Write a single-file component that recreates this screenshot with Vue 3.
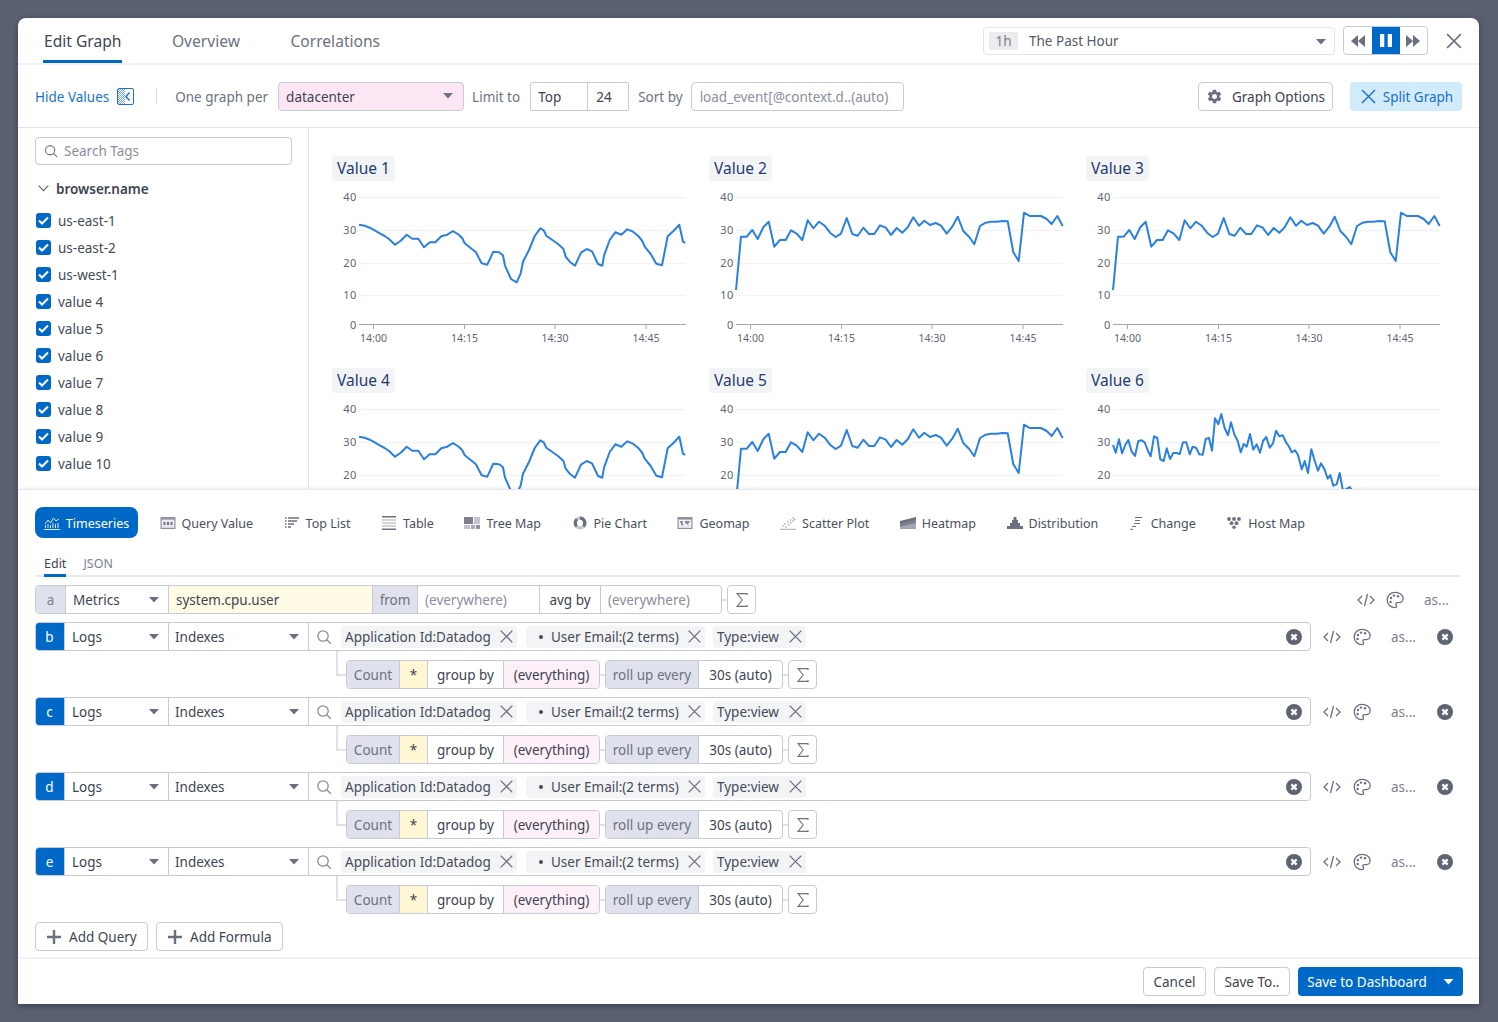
<script setup>
const line1 = [[118,224],[135,227],[150,233],[165,241],[180,250],[195,258],[208,267],[226,284],[243,272],[261,254],[278,266],[296,266],[313,292],[330,277],[347,277],[365,259],[383,254],[400,243],[418,255],[428,265],[435,280],[452,293],[469,307],[478,325],[486,340],[503,344],[521,305],[538,307],[550,316],[556,347],[574,387],[591,397],[603,370],[610,335],[628,300],[645,258],[662,235],[672,241],[680,257],[697,269],[715,282],[731,296],[738,320],[750,335],[766,347],[784,308],[801,297],[817,304],[835,342],[848,347],[853,317],[870,270],[887,247],[905,254],[923,238],[940,245],[955,257],[968,273],[975,290],[993,312],[1010,341],[1027,346],[1044,259],[1062,242],[1079,224],[1090,275],[1097,279]]
const line2 = [[78,420],[93,260],[110,260],[127,240],[143,267],[160,232],[176,215],[193,290],[210,270],[227,270],[243,241],[260,251],[277,270],[293,211],[310,235],[327,215],[344,227],[360,248],[377,261],[393,251],[410,204],[427,252],[443,257],[460,233],[477,252],[493,252],[510,226],[527,233],[543,255],[560,234],[577,248],[593,232],[610,202],[627,227],[643,212],[660,225],[677,219],[693,227],[710,251],[727,230],[743,200],[760,243],[777,260],[793,283],[810,228],[827,218],[843,215],[860,215],[877,213],[893,214],[910,307],[926,333],[942,188],[959,198],[976,198],[993,198],[1010,207],[1025,222],[1042,198],[1058,228]]
const line6 = [[85,240],[93,263],[103,223],[112,265],[122,240],[131,225],[141,260],[151,273],[161,228],[171,226],[180,232],[190,258],[198,274],[208,214],[218,219],[227,283],[237,288],[246,250],[256,282],[266,264],[276,264],[285,267],[295,232],[305,232],[315,268],[324,245],[334,248],[344,268],[354,269],[363,222],[373,219],[382,257],[391,160],[401,178],[410,147],[420,190],[430,211],[439,172],[449,208],[459,228],[468,262],[477,237],[486,245],[496,207],[506,254],[516,238],[526,263],[535,228],[545,216],[555,248],[565,235],[574,197],[584,214],[594,211],[604,232],[612,243],[621,262],[631,256],[640,270],[651,313],[660,288],[670,324],[680,253],[690,287],[700,317],[709,295],[719,312],[729,341],[737,330],[746,362],[756,358],[765,324],[775,378],[785,372],[795,366],[805,380],[820,400]]

const toPoints = (pts, x0, dy = 0) =>
  pts.map(([x, y]) => `${(27 + (x - x0) / 3).toFixed(1)},${(150 + (y + dy) / 3 - 181).toFixed(1)}`).join(' ')

const charts = [
  { title: 'Value 1', points: toPoints(line1, 118), full: true },
  { title: 'Value 2', points: toPoints(line2, 78), full: true },
  { title: 'Value 3', points: toPoints(line2, 78), full: true },
  { title: 'Value 4', points: toPoints(line1, 118), full: false },
  { title: 'Value 5', points: toPoints(line2, 78), full: false },
  { title: 'Value 6', points: toPoints(line6, 85, 9), full: false }
]
const gridLines = [{ v: 40, y: 16.5 }, { v: 30, y: 49.5 }, { v: 20, y: 82.5 }, { v: 10, y: 114.5 }]
const upperLines = gridLines.slice(0, 3)
const ticks = [{ t: '14:00', x: 41.5 }, { t: '14:15', x: 132.5 }, { t: '14:30', x: 223 }, { t: '14:45', x: 314 }]

const tags = ['us-east-1', 'us-east-2', 'us-west-1', 'value 4', 'value 5', 'value 6', 'value 7', 'value 8', 'value 9', 'value 10']

const chartTypes = [
  { id: 'i-query', label: 'Query Value' },
  { id: 'i-top', label: 'Top List' },
  { id: 'i-table', label: 'Table' },
  { id: 'i-tree', label: 'Tree Map' },
  { id: 'i-pie', label: 'Pie Chart' },
  { id: 'i-geo', label: 'Geomap' },
  { id: 'i-scatter', label: 'Scatter Plot' },
  { id: 'i-heat', label: 'Heatmap' },
  { id: 'i-dist', label: 'Distribution' },
  { id: 'i-change', label: 'Change' },
  { id: 'i-host', label: 'Host Map' }
]
const queries = ['b', 'c', 'd', 'e']
</script>

<template>
  <div class="page">
    <svg class="defs" xmlns="http://www.w3.org/2000/svg">
      <symbol id="x" viewBox="0 0 16 16"><path d="M2.5 2.5l11 11M13.5 2.5l-11 11" fill="none" stroke="currentColor" stroke-width="1.2"/></symbol>
      <symbol id="search" viewBox="0 0 16 16"><circle cx="7" cy="7" r="5.2" fill="none" stroke="currentColor" stroke-width="1.3"/><path d="M10.8 10.8l4 4" fill="none" stroke="currentColor" stroke-width="1.3"/></symbol>
      <symbol id="caret" viewBox="0 0 10 6"><path d="M0 0h10L5 5.5z" fill="currentColor"/></symbol>
      <symbol id="sigma" viewBox="0 0 16 16"><path d="M13 3V1.6H3L8.2 8 3 14.4h10V13" fill="none" stroke="currentColor" stroke-width="1.1"/></symbol>
      <symbol id="code" viewBox="0 0 18 14"><path d="M5 3L1 7l4 4M13 3l4 4-4 4M10.5 1L7.5 13" fill="none" stroke="currentColor" stroke-width="1.3"/></symbol>
      <symbol id="palette" viewBox="0 0 18 18"><path d="M9 1.3C4.7 1.3 1.2 4.8 1.2 9S4.7 16.7 9 16.7c1 0 1.6-.7 1.6-1.4 0-.5-.2-.8-.4-1.1-.3-.3-.4-.7-.4-1 0-.8.7-1.5 1.5-1.5h1.6c2.4 0 4.3-1.9 4.3-4.2 0-3.3-3.3-6.2-8.2-6.2z" fill="none" stroke="currentColor" stroke-width="1.3"/><circle cx="5" cy="7" r="1.2" fill="currentColor"/><circle cx="8" cy="4.6" r="1.2" fill="currentColor"/><circle cx="12" cy="5.2" r="1.2" fill="currentColor"/><circle cx="4.6" cy="11" r="1.2" fill="currentColor"/></symbol>
      <symbol id="xcircle" viewBox="0 0 16 16"><circle cx="8" cy="8" r="8" fill="currentColor"/><path d="M5.4 5.4l5.2 5.2M10.6 5.4l-5.2 5.2" fill="none" stroke="#fff" stroke-width="2.2"/></symbol>
      <symbol id="plus" viewBox="0 0 14 14"><path d="M7 0v14M0 7h14" fill="none" stroke="currentColor" stroke-width="2.4"/></symbol>
      <symbol id="gear" viewBox="0 0 24 24"><path fill="currentColor" d="M19.14 12.94c.04-.3.06-.61.06-.94 0-.32-.02-.64-.07-.94l2.03-1.58a.49.49 0 0 0 .12-.61l-1.92-3.32a.488.488 0 0 0-.59-.22l-2.39.96c-.5-.38-1.03-.7-1.62-.94l-.36-2.54a.484.484 0 0 0-.48-.41h-3.84c-.24 0-.43.17-.47.41l-.36 2.54c-.59.24-1.13.57-1.62.94l-2.39-.96c-.22-.08-.47 0-.59.22L2.74 8.87c-.12.21-.08.47.12.61l2.03 1.58c-.05.3-.09.63-.09.94s.02.64.07.94l-2.03 1.58a.49.49 0 0 0-.12.61l1.92 3.32c.12.22.37.29.59.22l2.39-.96c.5.38 1.03.7 1.62.94l.36 2.54c.05.24.24.41.48.41h3.84c.24 0 .44-.17.47-.41l.36-2.54c.59-.24 1.13-.56 1.62-.94l2.39.96c.22.08.47 0 .59-.22l1.92-3.32c.12-.22.07-.47-.12-.61l-2.01-1.58zM12 15.6c-1.98 0-3.6-1.62-3.6-3.6s1.62-3.6 3.6-3.6 3.6 1.62 3.6 3.6-1.62 3.6-3.6 3.6z"/></symbol>
      <symbol id="i-ts" viewBox="0 0 16 14"><path d="M1 8l3-4 2.5 3 3-5 2.5 3 3-2" fill="none" stroke="currentColor" stroke-width="1"/><path d="M0 13.5h16M1.5 9v3M4 8v4M6.5 9v3M9 7v5M11.5 8v4M14 7v5" fill="none" stroke="currentColor" stroke-width="1"/></symbol>
      <symbol id="i-query" viewBox="0 0 16 14"><rect x=".5" y="1" width="15" height="12" fill="#8f939e"/><rect x="1.7" y="3.6" width="12.6" height="8.2" fill="#e9eaee"/><path d="M3.5 6h2v3h-2zM7 6h2v3H7zM10.5 6h2v3h-2z" fill="#6b7080"/></symbol>
      <symbol id="i-top" viewBox="0 0 16 14"><path d="M4 2h11M4 5h9M4 8h6M4 11h3" fill="none" stroke="currentColor" stroke-width="1.3"/><path d="M1 2h1.5M1 5h1.5M1 8h1.5M1 11h1.5" fill="none" stroke="currentColor" stroke-width="1.3"/></symbol>
      <symbol id="i-table" viewBox="0 0 16 14"><path d="M1 .8h14M1 13.2h14" fill="none" stroke="currentColor" stroke-width="1.4"/><path d="M1 4h14M1 7h14M1 10h14" fill="none" stroke="#a7abb5" stroke-width="1.2"/></symbol>
      <symbol id="i-tree" viewBox="0 0 16 14"><rect x="0" y="1" width="9" height="7" fill="#7d818d"/><rect x="10" y="1" width="6" height="7" fill="#c3c6ce"/><rect x="0" y="9" width="6" height="4" fill="#c3c6ce"/><rect x="7" y="9" width="4" height="4" fill="#a7abb5"/><rect x="12" y="9" width="4" height="4" fill="#8f939e"/></symbol>
      <symbol id="i-pie" viewBox="0 0 14 14"><circle cx="7" cy="7" r="4.8" fill="none" stroke="#c3c6ce" stroke-width="3.2"/><path d="M7 2.2a4.8 4.8 0 0 1 3.4 8.2M3.6 10.4A4.8 4.8 0 0 1 4 3.3" fill="none" stroke="#6b7080" stroke-width="3.2"/></symbol>
      <symbol id="i-geo" viewBox="0 0 16 14"><rect x=".5" y="1" width="15" height="12" fill="#8f939e"/><rect x="1.7" y="3.6" width="12.6" height="8.2" fill="#f0f1f4"/><path d="M3 5h3l-.5 2 1 2L5 10 3.5 7zM8 5h5l-1 2-1 .5.5 2.5-1.5-2L8 7z" fill="#858995"/></symbol>
      <symbol id="i-scatter" viewBox="0 0 16 14"><path d="M0 13.3h16" fill="none" stroke="#a7abb5" stroke-width="1"/><g fill="#9599a5"><circle cx="3" cy="10" r=".8"/><circle cx="5" cy="8" r=".8"/><circle cx="6" cy="11" r=".8"/><circle cx="8" cy="6" r=".8"/><circle cx="9" cy="9" r=".8"/><circle cx="10.5" cy="4" r=".8"/><circle cx="11" cy="7" r=".8"/><circle cx="13" cy="2" r=".8"/><circle cx="13" cy="5" r=".8"/><circle cx="14.5" cy="3.5" r=".8"/></g></symbol>
      <symbol id="i-heat" viewBox="0 0 16 14"><path d="M0 5l8-2 8-2v6L8 9l-8 2z" fill="#6b7080"/><path d="M0 8l8-2 8-2v9H0z" fill="#858995" opacity=".75"/></symbol>
      <symbol id="i-dist" viewBox="0 0 16 14"><path d="M6.5 1h3v3H11v3h2v3h3v3H0v-3h3V7h2V4h1.500z" fill="#6b7080"/></symbol>
      <symbol id="i-change" viewBox="0 0 16 14"><path d="M6 1.5h7M6 4.500h5M5 7.500h6M3 10.500h4M1 13.200h3" fill="none" stroke="currentColor" stroke-width="1.100"/></symbol>
      <symbol id="i-host" viewBox="0 0 16 14"><g fill="#6b7080"><circle cx="3" cy="3" r="1.900"/><circle cx="8" cy="3" r="1.900"/><circle cx="13" cy="3" r="1.900"/><circle cx="5.500" cy="7.200" r="1.900"/><circle cx="10.500" cy="7.200" r="1.900"/><circle cx="8" cy="11.200" r="1.700"/></g></symbol>
    </svg>

    <div class="modal">
      <header class="head">
        <nav class="head-tabs">
          <span class="head-tab active">Edit Graph</span>
          <span class="head-tab">Overview</span>
          <span class="head-tab">Correlations</span>
        </nav>
        <div class="time">
          <span class="time-badge">1h</span>
          <span class="time-label">The Past Hour</span>
          <svg class="caret time-caret"><use href="#caret"/></svg>
        </div>
        <div class="player">
          <span class="pl-btn">
            <svg width="14" height="12" viewBox="0 0 14 12"><path d="M7 0v12L0 6zM14 0v12L7 6z" fill="#6b7080"/></svg>
          </span>
          <span class="pl-btn pl-on">
            <svg width="12" height="13" viewBox="0 0 12 13"><path d="M0 0h4.300v13H0zM7.700 0H12v13H7.700z" fill="#fff"/></svg>
          </span>
          <span class="pl-btn">
            <svg width="14" height="12" viewBox="0 0 14 12"><path d="M0 0v12l7-6zM7 0v12l7-6z" fill="#6b7080"/></svg>
          </span>
        </div>
        <svg class="close"><use href="#x"/></svg>
      </header>

      <section class="toolbar">
        <span class="hide">Hide Values</span>
        <svg class="hide-icon" width="17" height="17" viewBox="0 0 17 17">
          <defs><pattern id="hatch" width="2" height="2" patternUnits="userSpaceOnUse"><rect width="1" height="1" fill="#1a73d0"/><rect x="1" y="1" width="1" height="1" fill="#1a73d0"/></pattern></defs>
          <rect x="1" y="1" width="7" height="15" fill="url(#hatch)" opacity=".6"/>
          <rect x=".5" y=".5" width="16" height="16" rx="1.500" fill="none" stroke="#1a73d0"/>
          <path d="M12.500 4.500L9 8.500l3.500 4" fill="none" stroke="#1a73d0" stroke-width="1.500"/>
        </svg>
        <span class="vsep"></span>
        <span class="lbl one">One graph per</span>
        <div class="select pink">
          <span class="select-text">datacenter</span>
          <svg class="caret"><use href="#caret"/></svg>
        </div>
        <span class="lbl limit">Limit to</span>
        <div class="limit-box">
          <span class="lb-a">Top</span>
          <span class="lb-b">24</span>
        </div>
        <span class="lbl sort">Sort by</span>
        <div class="sort-box">load_event[@context.d..(auto)</div>
        <button class="btn opts">
          <svg class="gear"><use href="#gear"/></svg>
          Graph Options
        </button>
        <button class="split">
          <svg class="split-x"><use href="#x"/></svg>
          Split Graph
        </button>
      </section>

      <section class="main">
        <aside class="side">
          <div class="tag-search">
            <svg class="s-icon"><use href="#search"/></svg>
            <span>Search Tags</span>
          </div>
          <div class="facet">
            <svg width="11" height="7" viewBox="0 0 11 7"><path d="M.7.700l4.800 5 4.800-5" fill="none" stroke="#5f6472" stroke-width="1.100"/></svg>
            <span>browser.name</span>
          </div>
          <ul class="tags">
            <li v-for="t in tags" :key="t">
              <span class="check">
                <svg width="11" height="9" viewBox="0 0 11 9"><path d="M1 4.500l3 3 6-6" fill="none" stroke="#fff" stroke-width="2"/></svg>
              </span>
              {{ t }}
            </li>
          </ul>
        </aside>
        <div class="charts">
          <article v-for="c in charts" :key="c.title" class="chart">
            <h3 class="chart-title">{{ c.title }}</h3>
            <svg class="plot" width="377" :height="c.full ? 187 : 96" :viewBox="c.full ? '0 0 377 187' : '0 0 377 96'">
              <g v-for="g in (c.full ? gridLines : upperLines)" :key="g.v">
                <line x1="27" :x2="354" :y1="g.y" :y2="g.y" class="grid"/>
                <text x="24.500" :y="g.y + 3" class="ylab">{{ g.v }}</text>
              </g>
              <template v-if="c.full">
                <text x="24.500" y="148" class="ylab">0</text>
                <line x1="27" x2="354" y1="143.500" y2="143.500" class="axis"/>
                <g v-for="t in ticks" :key="t.t">
                  <line :x1="t.x" :x2="t.x" y1="143.500" y2="148" class="axis"/>
                  <text :x="t.x" y="161" class="xlab">{{ t.t }}</text>
                </g>
              </template>
              <polyline :points="c.points" class="series"/>
            </svg>
          </article>
        </div>
      </section>

      <section class="panel">
        <div class="ctypes">
          <span class="ctype on">
            <svg class="ct-icon"><use href="#i-ts"/></svg>
            Timeseries
          </span>
          <span v-for="c in chartTypes" :key="c.id" class="ctype">
            <svg class="ct-icon"><use :href="'#' + c.id"/></svg>
            {{ c.label }}
          </span>
        </div>

        <div class="subtabs">
          <span class="subtab active">Edit</span>
          <span class="subtab">JSON</span>
        </div>

        <div class="qrow">
          <div class="qbox qbox-a">
            <span class="seg letter-a">a</span>
            <span class="seg sel w-metrics">Metrics<svg class="caret"><use href="#caret"/></svg></span>
            <span class="seg metric">system.cpu.user</span>
            <span class="seg from">from</span>
            <span class="seg ph w-ev1">(everywhere)</span>
            <span class="seg w-avg">avg by</span>
            <span class="seg ph w-ev2">(everywhere)</span>
          </div>
          <span class="link"></span>
          <span class="sigma"><svg><use href="#sigma"/></svg></span>
          <div class="actions actions-a">
            <svg class="a-code"><use href="#code"/></svg>
            <svg class="a-pal"><use href="#palette"/></svg>
            <span class="a-as">as...</span>
          </div>
        </div>

        <template v-for="q in queries" :key="q">
          <div class="qrow">
            <div class="qbox qbox-full">
              <span class="seg letter">{{ q }}</span>
              <span class="seg sel w-logs">Logs<svg class="caret"><use href="#caret"/></svg></span>
              <span class="seg sel w-index">Indexes<svg class="caret"><use href="#caret"/></svg></span>
              <div class="filter">
                <svg class="f-search"><use href="#search"/></svg>
                <span class="chip c1">Application Id:Datadog<svg class="chip-x"><use href="#x"/></svg></span>
                <span class="chip c2"><i class="dot"></i>User Email:(2 terms)<svg class="chip-x"><use href="#x"/></svg></span>
                <span class="chip c3">Type:view<svg class="chip-x"><use href="#x"/></svg></span>
                <svg class="f-clear"><use href="#xcircle"/></svg>
              </div>
            </div>
            <div class="actions">
              <svg class="a-code"><use href="#code"/></svg>
              <svg class="a-pal"><use href="#palette"/></svg>
              <span class="a-as">as...</span>
              <svg class="a-del"><use href="#xcircle"/></svg>
            </div>
          </div>
          <div class="subrow">
            <span class="elbow"></span>
            <div class="qbox">
              <span class="seg gray w-count">Count</span>
              <span class="seg star">*</span>
              <span class="seg w-group">group by</span>
              <span class="seg pinkseg">(everything)</span>
            </div>
            <span class="link"></span>
            <div class="qbox">
              <span class="seg gray w-roll">roll up every</span>
              <span class="seg w-auto">30s (auto)</span>
            </div>
            <span class="link"></span>
            <span class="sigma"><svg><use href="#sigma"/></svg></span>
          </div>
        </template>

        <div class="adds">
          <button class="btn add w-q"><svg class="plus"><use href="#plus"/></svg>Add Query</button>
          <button class="btn add w-f"><svg class="plus"><use href="#plus"/></svg>Add Formula</button>
        </div>
      </section>

      <footer class="foot">
        <button class="btn w-cancel">Cancel</button>
        <button class="btn w-saveto">Save To..</button>
        <div class="save">
          <span class="save-main">Save to Dashboard</span>
          <span class="save-drop"><svg class="caret"><use href="#caret"/></svg></span>
        </div>
      </footer>
    </div>
  </div>
</template>

<style>
html, body { margin: 0; background: #5a5f72; }
</style>

<style scoped>
* { box-sizing: border-box; }
.defs { display: none; }
.page {
  width: 1498px;
  height: 1022px;
  padding: 18px 19px 18px 18px;
  background: #5a5f72;
  font-family: "Noto Sans", sans-serif;
  font-size: 13.5px;
  color: #3d4452;
  overflow: hidden;
}
.modal {
  width: 1461px;
  height: 986px;
  background: #fff;
  border-radius: 8px 8px 0 0;
  box-shadow: 0 2px 6px rgba(0, 0, 0, .35);
  display: flex;
  flex-direction: column;
  overflow: hidden;
}
.caret { width: 10px; height: 6px; color: #6b7080; flex: none; }

/* header */
.head {
  height: 47px;
  flex: none;
  display: flex;
  align-items: center;
  border-bottom: 2px solid #f0f1f6;
  padding-left: 25px;
}
.head-tabs { display: flex; gap: 48.5px; height: 45px; margin-right: auto; }
.head-tab { font-size: 15.6px; line-height: 46px; color: #6b7280; padding: 0 1px; height: 45px; }
.head-tab.active { color: #3d4452; border-bottom: 3px solid #0069c7; }
.time {
  width: 352px;
  height: 28px;
  border: 1px solid #e2e4ec;
  border-radius: 4px;
  display: flex;
  align-items: center;
  padding: 0 8px 0 5px;
}
.time-badge {
  width: 29px;
  height: 18px;
  background: #ececef;
  border-radius: 2px;
  color: #7d818d;
  text-align: center;
  line-height: 18px;
}
.time-label { margin-left: 11px; color: #555b68; }
.time-caret { margin-left: auto; margin-top: 3px; }
.player {
  margin-left: 8px;
  width: 85px;
  height: 29px;
  border: 1px solid #c6cad9;
  border-radius: 4px;
  display: flex;
  overflow: hidden;
}
.pl-btn { flex: 1; display: flex; align-items: center; justify-content: center; }
.pl-on { background: #0069c7; flex: none; width: 28px; }
.close { width: 20px; height: 20px; margin-left: 15.5px; margin-right: 15.5px; color: #6b7080; }

/* toolbar */
.toolbar {
  height: 63px;
  flex: none;
  display: flex;
  align-items: center;
  border-bottom: 1px solid #e2e4ee;
  padding-left: 17px;
}
.hide { color: #1a73d0; padding-top: 1px; }
.hide-icon { margin-left: 8px; }
.vsep { width: 1px; height: 16px; background: #d8dbe6; margin-left: 22px; }
.lbl { color: #6b7280; padding-top: 1px; }
.one { margin-left: 18px; }
.select {
  width: 186px;
  height: 29px;
  margin-left: 10px;
  border: 1px solid #c6cad9;
  border-radius: 4px;
  display: flex;
  align-items: center;
  justify-content: space-between;
  padding: 0 10px 0 7px;
}
.select-text { padding-top: 1px; }
.pink { background: #fde6f3; }
.limit { margin-left: 8px; }
.limit-box {
  margin-left: 10px;
  width: 99px;
  height: 29px;
  display: flex;
  border: 1px solid #c6cad9;
  border-radius: 2px;
  line-height: 29px;
}
.lb-a { width: 57px; padding-left: 7px; border-right: 1px solid #c6cad9; }
.lb-b { padding-left: 8px; }
.sort { margin-left: 9px; }
.sort-box {
  margin-left: 8px;
  width: 213px;
  height: 29px;
  border: 1px solid #c6cad9;
  border-radius: 4px;
  padding-left: 8px;
  line-height: 29px;
  color: #8a8f9b;
}
.btn {
  font: inherit;
  color: #3d4452;
  background: #fff;
  height: 29px;
  border: 1px solid #c6cad9;
  border-radius: 4px;
  padding: 0;
  display: inline-flex;
  align-items: center;
  justify-content: center;
}
.opts { margin-left: auto; width: 135px; gap: 9px; padding-top: 1px; }
.gear { width: 17px; height: 17px; color: #6b7080; }
.split {
  font: inherit;
  margin-left: 17px;
  margin-right: 17px;
  width: 112px;
  height: 29px;
  background: #d2ebfa;
  color: #1a6fcf;
  border: 0;
  border-radius: 4px;
  display: inline-flex;
  align-items: center;
  justify-content: center;
  gap: 5px;
  padding: 1px 0 0;
}
.split-x { width: 19px; height: 19px; }

/* main */
.main { height: 361px; flex: none; display: flex; overflow: hidden; }
.side { width: 291px; flex: none; border-right: 1px solid #e2e4ee; padding: 9px 0 0 17px; }
.tag-search {
  width: 257px;
  height: 28px;
  border: 1px solid #c6cad9;
  border-radius: 4px;
  display: flex;
  align-items: center;
  padding-left: 8px;
  color: #8a8f9b;
}
.s-icon { width: 14px; height: 14px; color: #6b7080; margin-right: 6px; }
.facet {
  margin-top: 14px;
  padding-left: 3px;
  display: flex;
  align-items: center;
  gap: 7px;
  font-weight: 600;
  font-size: 13.5px;
  height: 19px;
}
.tags { list-style: none; margin: 9px 0 0; padding: 0 0 0 1px; }
.tags li { height: 27px; display: flex; align-items: center; gap: 7px; font-size: 13.5px; color: #454b58; }
.check {
  width: 15px;
  height: 15px;
  background: #0069c7;
  border-radius: 3px;
  display: flex;
  align-items: center;
  justify-content: center;
}
.charts {
  flex: 1;
  padding: 28px 0 0 23px;
  display: grid;
  grid-template-columns: repeat(3, 377px);
  grid-auto-rows: 212px;
}
.chart { display: flex; flex-direction: column; align-items: flex-start; }
.chart-title {
  margin: 0;
  height: 25px;
  padding: 0 5px;
  background: #f3f4f6;
  border-radius: 4px;
  font-size: 15.5px;
  font-weight: 400;
  line-height: 25px;
  color: #1f3b73;
}
.plot { display: block; flex: none; font-family: "Noto Sans", sans-serif; }
.grid { stroke: #f2f3f5; stroke-width: 1.5; }
.axis { stroke: #a3a6af; stroke-width: 1; }
.ylab { font-size: 11px; fill: #5f6472; text-anchor: end; letter-spacing: .3px; }
.xlab { font-size: 10.5px; fill: #5f6472; text-anchor: middle; }
.series { fill: none; stroke: #2a80e0; stroke-width: 2; stroke-linejoin: round; }

/* panel */
.panel {
  flex: 1;
  position: relative;
  background: #fff;
  border-top: 1px solid #e8e9ef;
  box-shadow: 0 -1px 3px rgba(0, 0, 0, .08);
  padding: 17px 18px 0 17px;
}
.ctypes { display: flex; align-items: center; height: 31px; gap: 30.5px; }
.ctype { display: inline-flex; align-items: center; gap: 6px; font-size: 12.5px; color: #4a505d; padding-top: 1px; }
.ctype.on {
  background: #0069c7;
  color: #fff;
  height: 31px;
  width: 103px;
  border-radius: 8px;
  justify-content: center;
  margin-right: -9px;
}
.ct-icon { width: 16px; height: 14px; color: #6b7080; flex: none; }
.on .ct-icon { color: #d7e8f8; }
.subtabs {
  margin-top: 14px;
  height: 25px;
  border-bottom: 2px solid #ebecf2;
  display: flex;
  gap: 17px;
  padding-left: 9px;
  font-size: 12.5px;
}
.subtab { color: #7d818d; height: 25px; line-height: 23px; }
.subtab.active { color: #3d4452; border-bottom: 3px solid #0069c7; }

.qrow { height: 29px; margin-top: 8px; display: flex; align-items: center; }
.qbox {
  height: 29px;
  display: flex;
  border: 1px solid #c6cad9;
  border-radius: 4px;
  overflow: hidden;
  flex: none;
  color: #3d4452;
}
.qbox-a { width: 687px; }
.qbox-full { width: 1276px; }
.seg {
  height: 100%;
  display: inline-flex;
  align-items: center;
  padding: 0 7px;
  border-right: 1px solid #c6cad9;
  flex: none;
  white-space: nowrap;
}
.seg:last-child { border-right: 0; }
.letter-a { width: 30px; background: #dfe2ec; color: #7d818d; justify-content: center; }
.letter { width: 30px; background: #0069c7; color: #fff; justify-content: center; margin: -1px 0 -1px -1px; height: 29px; }
.sel { justify-content: space-between; padding-right: 9px; }
.w-metrics { width: 103px; }
.w-logs { width: 104px; }
.w-index { width: 140px; padding-left: 6px; }
.metric { width: 204px; background: #fffbe5; }
.from { width: 45px; background: #dfe2ec; color: #6b7280; justify-content: center; }
.ph { color: #8a8f9b; }
.w-ev1 { width: 122px; }
.w-avg { width: 61px; justify-content: center; }
.w-ev2 { width: 121px; }
.link { width: 5px; height: 2px; background: #dfe2ec; flex: none; }
.sigma {
  width: 29px;
  height: 29px;
  border: 1px solid #c6cad9;
  border-radius: 4px;
  display: inline-flex;
  align-items: center;
  justify-content: center;
  color: #6b7080;
  flex: none;
}
.sigma svg { width: 16px; height: 16px; }
.filter { flex: 1; display: flex; align-items: center; padding-left: 7px; min-width: 0; }
.f-search { width: 16px; height: 16px; color: #8a8f9b; flex: none; }
.chip {
  height: 22px;
  background: #f3f4f6;
  border-radius: 4px;
  display: inline-flex;
  align-items: center;
  padding: 0 2px 0 4px;
  flex: none;
  color: #454b58;
  white-space: nowrap;
}
.chip-x { width: 17px; height: 17px; color: #6b7080; flex: none; margin-left: auto; }
.c1 { width: 176px; margin-left: 9px; }
.c2 { width: 179px; margin-left: 9px; padding-left: 13px; }
.c3 { width: 93px; margin-left: 8px; }
.dot { width: 4px; height: 4px; border-radius: 50%; background: #454b58; margin-right: 8px; flex: none; }
.f-clear { width: 16px; height: 16px; color: #5f6472; margin-left: auto; margin-right: 8px; flex: none; }
.actions { display: flex; align-items: center; flex: none; margin-left: 12px; color: #6b7080; }
.actions-a { margin-left: auto; margin-right: 12px; }
.a-code { width: 18px; height: 14px; }
.a-pal { width: 18px; height: 18px; margin-left: 12px; }
.a-as { margin-left: 20px; width: 25px; font-size: 13.5px; color: #7d818d; white-space: nowrap; }
.actions-a .a-pal { margin-left: 11px; }
.a-del { width: 16px; height: 16px; margin-left: 21px; color: #5f6472; }

.subrow { height: 29px; margin-top: 9px; display: flex; align-items: center; }
.elbow {
  width: 10px;
  height: 25px;
  margin: -9px 0 0 301px;
  align-self: flex-start;
  border-left: 2px solid #dfe2ec;
  border-bottom: 2px solid #dfe2ec;
  flex: none;
}
.gray { background: #dfe2ec; color: #6b7280; }
.w-count { width: 53px; justify-content: center; padding: 0; }
.star { width: 28px; background: #fff6d4; justify-content: center; padding: 0; }
.w-group { width: 76px; justify-content: center; padding: 0; }
.pinkseg { width: 95px; background: #fdf0f8; justify-content: center; padding: 0; }
.w-roll { width: 93px; justify-content: center; padding: 0; }
.w-auto { width: 83px; justify-content: center; padding: 0; }

.adds { margin-top: 8px; display: flex; gap: 8px; }
.add { justify-content: flex-start; padding-left: 11px; gap: 8px; }
.w-q { width: 113px; }
.w-f { width: 127px; }
.plus { width: 14px; height: 14px; color: #6b7080; }

/* footer */
.foot {
  height: 47px;
  flex: none;
  border-top: 2px solid #f0f1f5;
  display: flex;
  align-items: center;
  justify-content: flex-end;
  gap: 8px;
  padding-right: 16px;
  position: relative;
  background: #fff;
}
.w-cancel { width: 63px; }
.w-saveto { width: 76px; }
.save {
  width: 165px;
  height: 29px;
  background: #0069c7;
  border-radius: 4px;
  color: #fff;
  display: flex;
}
.save-main { flex: 1; padding-left: 3px; text-align: center; line-height: 30px; border-right: 1px solid #0059ab; }
.save-drop { width: 29px; display: flex; align-items: center; justify-content: center; }
.save-drop .caret { color: #fff; width: 11px; }
</style>
